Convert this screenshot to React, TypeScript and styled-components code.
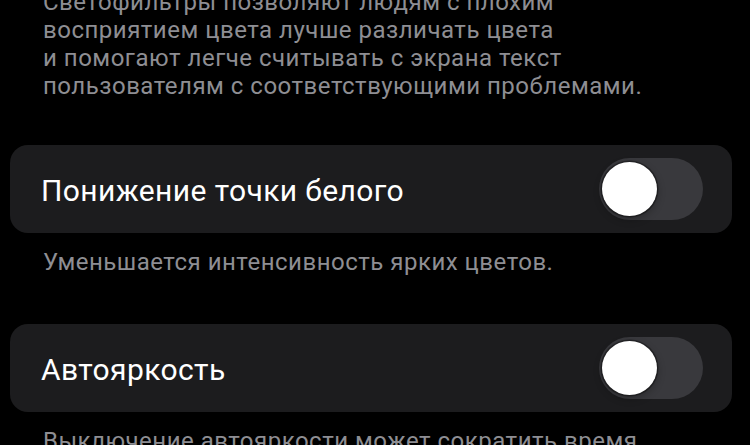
import React from "react";
import styled, { createGlobalStyle } from "styled-components";

const GlobalStyle = createGlobalStyle`
  html, body {
    margin: 0;
    padding: 0;
    background: #000;
  }
  body {
    width: 750px;
    height: 445px;
    overflow: hidden;
    font-family: Roboto, "Noto Sans", "Liberation Sans", sans-serif;
    -webkit-font-smoothing: antialiased;
  }
`;

const Screen = styled.div`
  display: flex;
  flex-direction: column;
  padding: 0 18px 0 10px;
  margin-top: -15px;
`;

const Footer = styled.p`
  margin: 0;
  padding-left: 33px;
  color: #8e8e93;
  font-size: 24px;
  line-height: 28px;
  letter-spacing: 0.5px;
  white-space: nowrap;
`;

const Intro = styled(Footer)`
  margin-top: 3px;
  margin-bottom: -3px;
`;

const Group = styled.section`
  display: flex;
  flex-direction: column;
  gap: 15px;
  margin-top: 48px;
`;

const Card = styled.div`
  display: flex;
  align-items: center;
  justify-content: space-between;
  height: 88px;
  padding: 0 29px 0 31px;
  background: #1c1c1e;
  border-radius: 18px;
`;

const Title = styled.span`
  color: #fff;
  font-size: 30px;
  line-height: 36px;
  letter-spacing: 0.4px;
  padding-top: 3px;
`;

const Track = styled.div<{ $on?: boolean }>`
  position: relative;
  width: 104px;
  height: 62px;
  border-radius: 31px;
  background: ${(p) => (p.$on ? "#30d158" : "#39393d")};
  flex-shrink: 0;
`;

const Knob = styled.div<{ $on?: boolean }>`
  position: absolute;
  top: 4px;
  left: ${(p) => (p.$on ? "46px" : "3px")};
  width: 55px;
  height: 54px;
  border-radius: 50%;
  background: #fff;
  box-shadow: 0 0 0 1.5px rgba(0, 0, 0, 0.35), 0 3px 8px rgba(0, 0, 0, 0.3);
`;

function Toggle({ on }: { on?: boolean }) {
  return (
    <Track $on={on}>
      <Knob $on={on} />
    </Track>
  );
}

function SettingRow({ title, note }: { title: string; note: string }) {
  return (
    <Group>
      <Card>
        <Title>{title}</Title>
        <Toggle />
      </Card>
      <Footer>{note}</Footer>
    </Group>
  );
}

export default function App() {
  return (
    <>
      <GlobalStyle />
      <Screen>
        <Intro>
          Светофильтры позволяют людям с плохим
          <br />
          восприятием цвета лучше различать цвета
          <br />
          и помогают легче считывать с экрана текст
          <br />
          пользователям с соответствующими проблемами.
        </Intro>
        <SettingRow
          title="Понижение точки белого"
          note="Уменьшается интенсивность ярких цветов."
        />
        <SettingRow
          title="Автояркость"
          note="Выключение автояркости может сократить время"
        />
      </Screen>
    </>
  );
}
